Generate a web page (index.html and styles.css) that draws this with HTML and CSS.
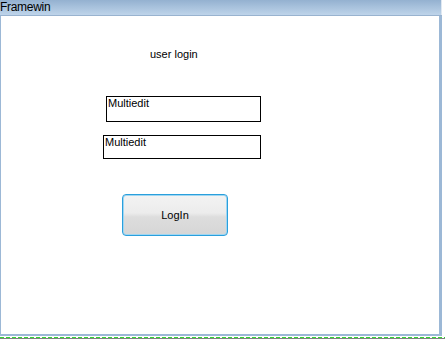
FILE: index.html
```html
<!DOCTYPE html>
<html>
<head>
<meta charset="utf-8">
<link rel="stylesheet" href="styles.css">
</head>
<body>
<div class="frame">
  <div class="titlebar">Framewin</div>
  <div class="client">
    <div class="heading">user login</div>
    <div class="edit edit-one">Multiedit</div>
    <div class="edit edit-two">Multiedit</div>
    <div class="button">LogIn</div>
  </div>
</div>
<div class="desk-line"></div>
</body>
</html>
```
FILE: styles.css
```css
html, body {
  margin: 0;
  padding: 0;
  background: #ffffff;
}
body {
  width: 445px;
  height: 339px;
  overflow: hidden;
  font-family: "Liberation Sans", Arial, sans-serif;
  font-size: 11px;
  color: #000;
}
.frame {
  width: 438px;
  height: 334px;
  border-left: 1px solid #9cb8d6;
  border-right: 3px solid #9cb8d6;
  border-bottom: 2px solid #9cb8d6;
  display: flex;
  flex-direction: column;
  box-sizing: content-box;
}
.titlebar {
  height: 15px;
  line-height: 15px;
  border-bottom: 1px solid #99b3cf;
  background: linear-gradient(#94b1d0, #bed4ea);
  font-size: 12px;
  padding-left: 0;
  margin-left: -1px;
  margin-right: -3px;
  box-shadow: inset -1px 0 0 #dfe8f2;
  letter-spacing: -0.3px;
}
.client {
  flex: 1;
  display: flex;
  flex-direction: column;
  align-items: flex-start;
}
.heading {
  margin-top: 31px;
  margin-left: 149px;
  height: 14px;
  line-height: 14px;
}
.edit {
  border: 1px solid #000;
  box-sizing: border-box;
  padding: 0 0 0 1px;
  line-height: 13px;
}
.edit-one {
  margin-top: 35px;
  margin-left: 105px;
  width: 155px;
  height: 26px;
}
.edit-two {
  margin-top: 13px;
  margin-left: 102px;
  width: 158px;
  height: 24px;
}
.button {
  margin-top: 35px;
  margin-left: 121px;
  width: 106px;
  height: 42px;
  box-sizing: border-box;
  border: 1px solid #2a9fdc;
  border-radius: 4px;
  box-shadow: inset 0 0 0 1px #9fd6f2;
  background: linear-gradient(#f3f3f3 0%, #ececec 45%, #dddddd 55%, #d6d6d6 100%);
  display: flex;
  align-items: center;
  justify-content: center;
}
.desk-line {
  margin-top: 1px;
  height: 1px;
  background: repeating-linear-gradient(90deg, #33d633 0 4px, #ffffff 4px 6px);
  border-bottom: 1px solid #808080;
}
```
